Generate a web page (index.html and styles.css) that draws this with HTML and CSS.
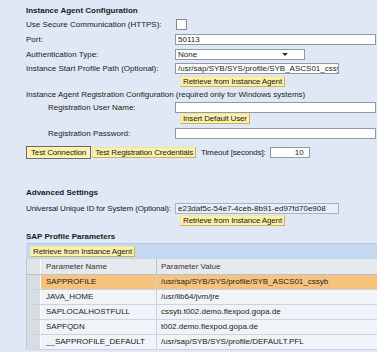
FILE: index.html
```html
<!DOCTYPE html>
<html>
<head>
<meta charset="utf-8">
<link rel="stylesheet" href="styles.css">
</head>
<body>
<div class="page">
  <div class="title">Instance Agent Configuration</div>
  <div class="row r-check"><span class="label">Use Secure Communication (HTTPS):</span><span class="checkbox"></span></div>
  <div class="row r-port"><span class="label">Port:</span><span class="field w-full">50113</span></div>
  <div class="row r-auth"><span class="label">Authentication Type:</span><span class="field select">None<span class="arrow"></span></span></div>
  <div class="row r-path"><span class="label">Instance Start Profile Path (Optional):</span><span class="field w-path">/usr/sap/SYB/SYS/profile/SYB_ASCS01_cssy</span></div>
  <div class="row r-btn"><span class="label"></span><span class="btn">Retrieve from Instance Agent</span></div>
  <div class="row r-text">Instance Agent Registration Configuration (required only for Windows systems)</div>
  <div class="row r-user"><span class="label indent">Registration User Name:</span><span class="field w-full"></span></div>
  <div class="row r-btn"><span class="label"></span><span class="btn">Insert Default User</span></div>
  <div class="row r-pass"><span class="label indent">Registration Password:</span><span class="field w-full"></span></div>
  <div class="row r-actions"><span class="btn primary">Test Connection</span><span class="btn">Test Registration Credentials</span><span class="timeout-label">Timeout [seconds]:</span><span class="field w-timeout">10</span></div>

  <div class="title t-adv">Advanced Settings</div>
  <div class="row r-uuid"><span class="label tight">Universal Unique ID for System (Optional):</span><span class="field readonly w-path">e23daf5c-54e7-4ceb-8b91-ed97fd70e908</span></div>
  <div class="row r-btn r-btn-uuid"><span class="label"></span><span class="btn">Retrieve from Instance Agent</span></div>

  <div class="title t-sap">SAP Profile Parameters</div>
  <div class="table">
    <div class="toolbar"><span class="btn">Retrieve from Instance Agent</span></div>
    <div class="trow head"><span class="sel"></span><span class="c-name">Parameter Name</span><span class="c-val">Parameter Value</span></div>
    <div class="trow selected"><span class="sel"></span><span class="c-name">SAPPROFILE</span><span class="c-val">/usr/sap/SYB/SYS/profile/SYB_ASCS01_cssyb</span></div>
    <div class="trow"><span class="sel"></span><span class="c-name">JAVA_HOME</span><span class="c-val">/usr/lib64/jvm/jre</span></div>
    <div class="trow"><span class="sel"></span><span class="c-name">SAPLOCALHOSTFULL</span><span class="c-val">cssyb.t002.demo.flexpod.gopa.de</span></div>
    <div class="trow"><span class="sel"></span><span class="c-name">SAPFQDN</span><span class="c-val">t002.demo.flexpod.gopa.de</span></div>
    <div class="trow"><span class="sel"></span><span class="c-name">__SAPPROFILE_DEFAULT</span><span class="c-val">/usr/sap/SYB/SYS/profile/DEFAULT.PFL</span></div>
  </div>
</div>
</body>
</html>
```

FILE: styles.css
```css
html, body {
  margin: 0;
  padding: 0;
  background: #dfe8f4;
}
body {
  font-family: "Liberation Sans", Arial, sans-serif;
  font-size: 8px;
  color: #222;
  overflow: hidden;
  width: 377px;
  height: 352px;
}
.page {
  padding: 5px 0 0 26px;
}
.title {
  font-weight: bold;
  height: 12px;
  line-height: 12px;
  color: #1a1a1a;
}
.t-adv { margin-top: 28px; }
.t-sap { margin-top: 5px; height: 12px; line-height: 12px; }
.row {
  display: flex;
  align-items: center;
  white-space: nowrap;
}
.label {
  width: 149px;
  flex: none;
}
.label.indent { padding-left: 22px; width: 127px; }
.label.tight { letter-spacing: -0.15px; }
.r-check { height: 15px; }
.r-port { height: 15px; }
.r-auth { height: 14px; }
.r-path { height: 15px; }
.r-btn { height: 11px; }
.r-btn .btn { margin-left: 5px; }
.r-text { height: 14px; }
.r-user { height: 12px; }
.r-pass { height: 12px; margin-top: 3px; }
.r-actions { height: 14px; margin-top: 6px; }
.r-uuid { height: 12px; margin-top: 3px; }
.r-btn-uuid { margin-top: 1px; }

.checkbox {
  width: 9px;
  height: 9px;
  border: 1px solid #7f8a99;
  background: #fff;
  margin-left: 1px;
}
.field {
  display: block;
  box-sizing: border-box;
  height: 11px;
  line-height: 9px;
  border: 1px solid #8e9aa8;
  background: #fff;
  padding: 0 2px;
  overflow: hidden;
  white-space: nowrap;
  color: #222;
  position: relative;
}
.w-full { width: 201px; }
.w-path { width: 164px; }
.select { width: 130px; }
.arrow {
  position: absolute;
  right: 16px;
  top: 3px;
  width: 0;
  height: 0;
  border-left: 3px solid transparent;
  border-right: 3px solid transparent;
  border-top: 3px solid #333;
}
.readonly {
  background: #e6eef8;
  border-color: #a7b3c2;
}
.w-timeout {
  width: 40px;
  text-align: right;
  padding-right: 5px;
  margin-left: 4px;
}
.timeout-label { margin-left: 5px; letter-spacing: -0.15px; }

.btn {
  display: inline-block;
  box-sizing: border-box;
  height: 11px;
  line-height: 9px;
  padding: 0 2px;
  letter-spacing: -0.15px;
  background: #fdf0aa;
  border: 1px solid #c9b45c;
  border-top-color: #efe3a6;
  border-left-color: #efe3a6;
  color: #1a1a1a;
  white-space: nowrap;
}
.btn.primary {
  height: 13px;
  line-height: 9px;
  border: 1px solid #6a6a6a;
  box-shadow: inset 0 0 0 1px #fff6c8;
  padding: 1px 4px;
  margin-right: 1px;
}

.toolbar {
  height: 16px;
  background: #c5d8ef;
  display: flex;
  align-items: center;
  padding-left: 4px;
  border-top: 1px solid #b7c9df;
  box-sizing: border-box;
}
.trow {
  display: flex;
  height: 15px;
  line-height: 14px;
  box-sizing: border-box;
  border-bottom: 1px solid #c9d4e2;
}
.trow .sel {
  width: 15px;
  flex: none;
  background: #d8dde3;
  border-right: 1px solid #fff;
  border-left: 1px solid #bfc7d1;
  box-sizing: border-box;
}
.trow .c-name {
  width: 116px;
  flex: none;
  padding-left: 5px;
  box-sizing: border-box;
  border-right: 1px solid #c9d4e2;
  background: #f0f4f9;
}
.trow .c-val {
  flex: 1;
  padding-left: 4px;
  background: #f0f4f9;
  white-space: nowrap;
}
.trow.head {
  height: 16px;
  line-height: 15px;
  border-bottom: 1px solid #b8c2ce;
}
.trow.head .c-name, .trow.head .c-val {
  background: #e6eaef;
  color: #333;
}
.trow.head .c-name { border-right-color: #b8c2ce; }
.trow.head .sel { background: #e1e5ea; }
.trow.selected .c-name, .trow.selected .c-val {
  background: #f6c37f;
}
```
